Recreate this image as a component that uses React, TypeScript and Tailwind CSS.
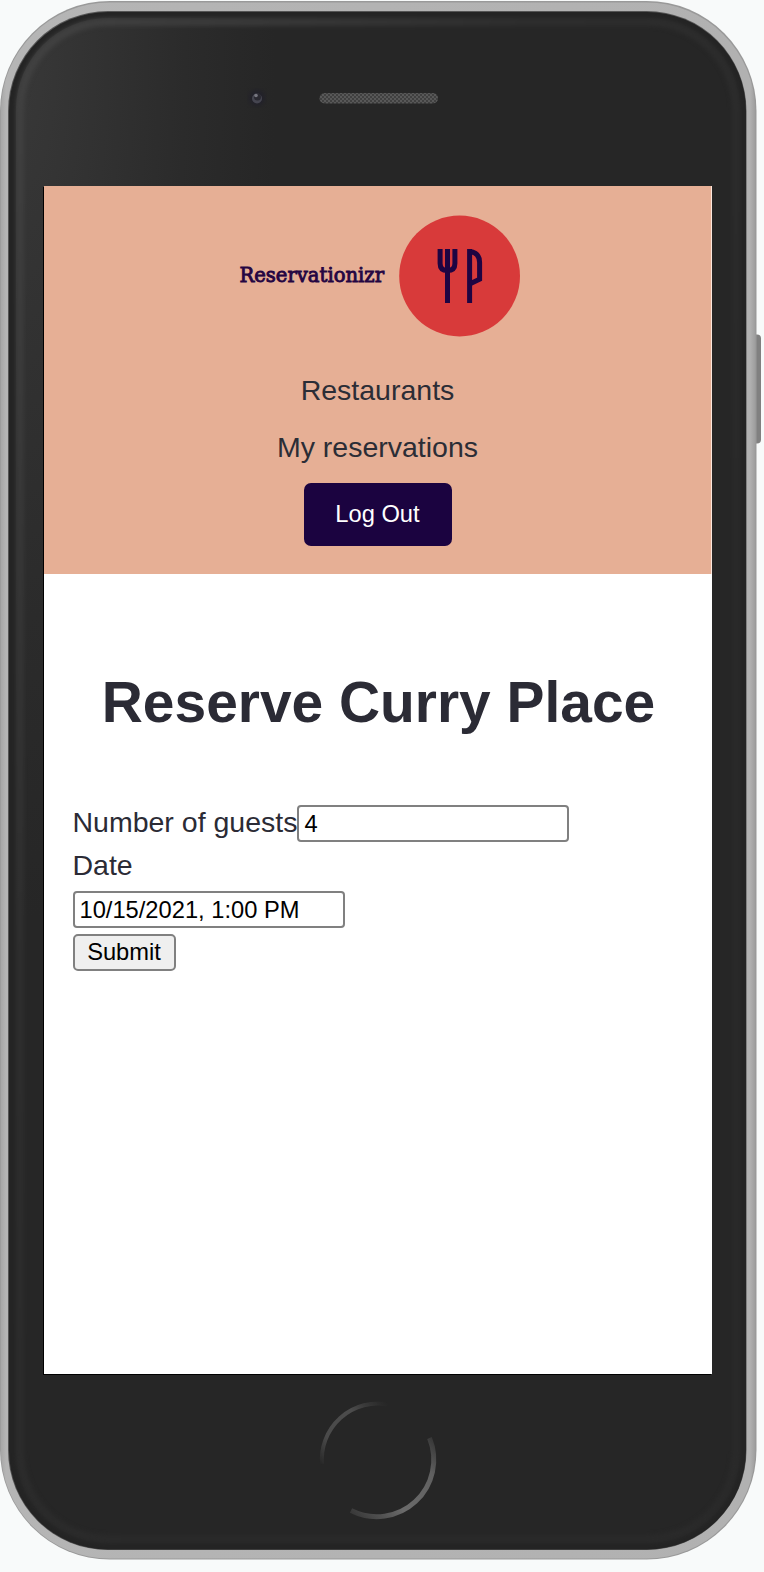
import React from "react";

function Logo() {
  return (
    <svg width="284" height="122" viewBox="0 0 284 122" className="relative left-[2px] block" role="img" aria-label="Reservationizr">
      <text
        x="1.5"
        y="67"
        fontSize="20"
        fontWeight="400"
        fill="#240542"
        stroke="#240542"
        strokeWidth="0.9"
        textLength="144.5"
        lengthAdjust="spacingAndGlyphs"
        fontFamily="'DejaVu Serif', serif"
      >
        Reservationizr
      </text>
      <circle cx="221.6" cy="61" r="60.4" fill="#d83a3a" />
      <g fill="none" stroke="#1e0442" strokeWidth="5">
        <path d="M200.3 34V48.5Q200.3 55.5 207.6 55.5Q215.1 55.5 215.1 48.5V34" transform="translate(1.8 0)" />
        <path d="M209.5 34V88" />
        <path d="M231.6 88V34" />
        <path d="M231.6 36.5Q241.6 37.5 241.6 47.5V64.2L231.6 69" />
      </g>
    </svg>
  );
}

function Header() {
  return (
    <header className="flex h-[388px] flex-col items-center border-r border-[#fbe6dc] bg-[#e6af95] pt-[29px]">
      <Logo />
      <nav className="mt-[24.5px] flex flex-col items-center text-[28.5px] leading-[57px] text-[#2b2d36]">
        <a>Restaurants</a>
        <a>My reservations</a>
      </nav>
      <button className="mt-[7.5px] h-[62.5px] w-[148px] rounded-[7px] bg-[#1b0340] pt-[2px] text-[23.7px] text-white">
        Log Out
      </button>
    </header>
  );
}

function ReservationForm() {
  return (
    <form className="px-[28.5px] text-[28.5px] leading-[43px] text-[#2b2b35]" onSubmit={(e) => e.preventDefault()}>
      <div className="flex h-[43px] items-center">
        <label htmlFor="guests" className="whitespace-nowrap">Number of guests</label>
        <input
          id="guests"
          defaultValue="4"
          className="relative top-px h-[37px] w-[271.5px] shrink-0 rounded-[4px] border-2 border-[#808080] bg-white px-[5px] pt-[2px] text-[23.7px] leading-none text-black"
        />
      </div>
      <label htmlFor="date" className="block h-[46.5px]">Date</label>
      <input
        id="date"
        defaultValue="10/15/2021, 1:00 PM"
        className="block h-[37px] w-[272px] rounded-[4px] border-2 border-[#808080] bg-white px-[5px] pt-[2px] text-[23.7px] leading-none text-black"
      />
      <button className="mt-[6px] block h-[37px] w-[103px] rounded-[5px] border-2 border-[#808080] bg-[#efefef] pt-[2px] text-[23.7px] leading-none text-black">
        Submit
      </button>
    </form>
  );
}

function Hardware() {
  return (
    <svg width="764" height="1572" viewBox="0 0 764 1572" className="absolute left-0 top-0" aria-hidden="true">
      <defs>
        <linearGradient id="frame" x1="0" x2="1">
          <stop offset="0" stopColor="#a6a6a6" />
          <stop offset="0.007" stopColor="#b5b5b5" />
          <stop offset="0.993" stopColor="#b1b1b1" />
          <stop offset="1" stopColor="#9d9d9d" />
        </linearGradient>
        <radialGradient id="glass" gradientUnits="userSpaceOnUse" cx="0" cy="0" r="1" gradientTransform="translate(16 60) scale(260 860)">
          <stop offset="0" stopColor="#383838" />
          <stop offset="0.3" stopColor="#323232" />
          <stop offset="0.65" stopColor="#2b2b2b" />
          <stop offset="1" stopColor="#262626" />
        </radialGradient>
        <linearGradient id="edge" gradientUnits="userSpaceOnUse" x1="10" y1="100" x2="745" y2="500">
          <stop offset="0" stopColor="#414141" />
          <stop offset="0.5" stopColor="#2e2e2e" />
          <stop offset="1" stopColor="#2a2a2a" />
        </linearGradient>
        <linearGradient id="arcTop" gradientUnits="userSpaceOnUse" x1="320" y1="1464" x2="388" y2="1404">
          <stop offset="0" stopColor="#4f4f4f" stopOpacity="0" />
          <stop offset="0.25" stopColor="#4a4a4a" />
          <stop offset="0.65" stopColor="#4c4c4c" />
          <stop offset="1" stopColor="#444" stopOpacity="0" />
        </linearGradient>
        <linearGradient id="arcBottom" gradientUnits="userSpaceOnUse" x1="350" y1="1512" x2="434" y2="1434">
          <stop offset="0" stopColor="#383838" />
          <stop offset="0.35" stopColor="#6a6a6a" />
          <stop offset="0.75" stopColor="#606060" />
          <stop offset="1" stopColor="#303030" />
        </linearGradient>
        <pattern id="mesh" width="4" height="4" patternUnits="userSpaceOnUse">
          <rect width="4" height="4" fill="#404040" />
          <rect width="2" height="2" fill="#585858" />
          <rect x="2" y="2" width="2" height="2" fill="#585858" />
        </pattern>
        <filter id="soft" x="-10%" y="-10%" width="120%" height="120%" colorInterpolationFilters="sRGB">
          <feGaussianBlur stdDeviation="2" />
        </filter>
        <filter id="softer" x="-10%" y="-30%" width="120%" height="160%" colorInterpolationFilters="sRGB">
          <feGaussianBlur stdDeviation="0.7" />
        </filter>
      </defs>
      <rect x="750" y="334.5" width="11" height="109" rx="4" fill="#808080" />
      <rect x="0" y="1" width="756.5" height="1558.5" rx="110" fill="#999" />
      <rect x="0.8" y="2.5" width="754.5" height="1556" rx="109" fill="url(#frame)" />
      <rect x="8" y="11" width="738.5" height="1539" rx="100" fill="#555" />
      <rect x="9" y="12" width="737" height="1537.5" rx="99" fill="#242424" />
      <rect x="16" y="18" width="724" height="1525" rx="92" fill="url(#glass)" />
      <rect x="20" y="22" width="716" height="1517" rx="88" fill="none" stroke="url(#edge)" strokeWidth="8" filter="url(#soft)" />
      <circle cx="257" cy="98" r="8" fill="#22212a" filter="url(#soft)" />
      <circle cx="257" cy="98.5" r="5" fill="#454550" filter="url(#softer)" />
      <circle cx="257.5" cy="97" r="3.5" fill="#2a2931" filter="url(#softer)" />
      <circle cx="256" cy="95.5" r="1.8" fill="#777780" filter="url(#softer)" />
      <rect x="319.5" y="93" width="118.5" height="10.5" rx="5" fill="url(#mesh)" filter="url(#softer)" />
      <g fill="none" filter="url(#softer)">
        <path d="M322 1464A56 56 0 0 1 388 1404.5" stroke="url(#arcTop)" strokeWidth="4" />
        <path d="M429.5 1438A57 57 0 0 1 351 1510.5" stroke="url(#arcBottom)" strokeWidth="5" />
      </g>
    </svg>
  );
}

export default function App() {
  return (
    <div className="relative h-[1572px] w-[764px] overflow-hidden bg-[#f8fafa] pl-[44px] pt-[186px] [font-family:'Liberation_Sans',Arial,sans-serif]">
      <Hardware />
      <div className="relative h-[1188px] w-[668px] bg-white shadow-[-1px_1px_0_#000]">
        <Header />
        <main>
          <h1 className="mb-[65px] mt-[94px] pl-px text-center text-[56.9px] font-bold leading-[68px] text-[#2b2b35]">
            Reserve Curry Place
          </h1>
          <ReservationForm />
        </main>
      </div>
    </div>
  );
}
